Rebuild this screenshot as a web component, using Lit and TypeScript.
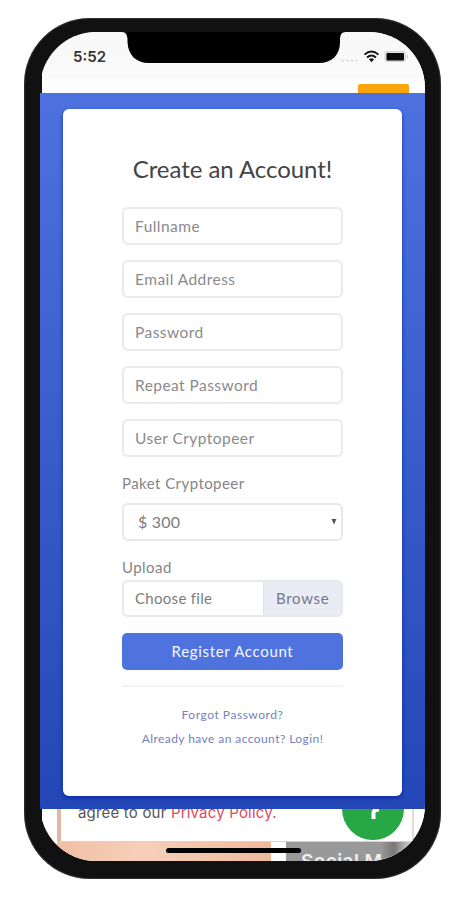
import { LitElement, html, css } from "lit";
import { customElement } from "lit/decorators.js";

@customElement("status-bar")
class StatusBar extends LitElement {
  static styles = css`
    :host { display: block; height: 61px; background: linear-gradient(#f8f8f8, #fafafa 45px, #fff 50px); position: relative; }
    .row { display: flex; align-items: center; height: 50px; padding: 0 17px 0 31px; justify-content: space-between; }
    .time { font: 600 15px/20px "Inter", "Liberation Sans", sans-serif; color: #333; }
    .icons { display: block; width: 68px; height: 16px; }
    .notch { position: absolute; left: 80px; top: -1px; width: 224px; height: 33px; }
    .tab { position: absolute; left: 316px; top: 52px; width: 51px; height: 9px; background: #fba50a; border-radius: 2px 2px 0 0; }
  `;
  render() {
    return html`
      <div class="row">
        <span class="time">5:52</span>
        <svg class="icons" viewBox="0 0 68 16">
          <g fill="#d0d0d0"><circle cx="2.500" cy="11.500" r="1"/><circle cx="7.500" cy="11.500" r="1"/><circle cx="12" cy="11.500" r="1"/><circle cx="16.500" cy="11.500" r="1"/></g>
          <g fill="none" stroke="#171717" stroke-width="1.900"><path d="M24.500 5.600Q31.500 -.4 38.500 5.600"/><path d="M27 8.500Q31.500 4.500 36 8.500"/></g>
          <path d="M28.900 10.200Q31.500 8.200 34.100 10.200L31.500 13.200Z" fill="#171717"/>
          <rect x="45" y="2.500" width="20.500" height="10" rx="2" fill="#e6e6e6" stroke="#d0d0d0"/>
          <rect x="46.500" y="4" width="17.500" height="7.500" rx="1" fill="#090909"/>
          <path d="M67 5.500Q69 7.500 67 9.500Z" fill="#bbb"/>
        </svg>
      </div>
      <svg class="notch" viewBox="0 0 224 33">
        <path d="M0 0V1C4 1 5 4 5.500 8V11C6 24 14 32 27 32H197C210 32 218 24 218 11V8C218.500 4 219 1 224 1V0Z" fill="#000"/>
      </svg>
      <div class="tab"></div>
    `;
  }
}

@customElement("text-field")
class TextField extends LitElement {
  static styles = css`
    :host { display: flex; align-items: center; box-sizing: border-box; height: 38px; border: 2px solid #eaeaed; border-radius: 6px; padding: 0 11px 1px; background: #fff; color: #8a8a8d; white-space: nowrap; }
  `;
  render() {
    return html`<span><slot></slot></span>`;
  }
}

@customElement("register-form")
class RegisterForm extends LitElement {
  static styles = css`
    :host { display: block; box-sizing: border-box; height: 716px; margin-left: -2px; padding: 16px 23px 13px; background: linear-gradient(#4d72df, #2347b6); font: 15px/20px "Lato", sans-serif; color: #858588; white-space: nowrap; }
    .card { box-sizing: border-box; height: 687px; border-radius: 6px; background: #fff; padding: 43px 59px 0; box-shadow: 0 2px 4px #0019a0aa; }
    h1 { margin: 0; font: 400 24px/34px "Lato", sans-serif; color: #444; text-align: center; letter-spacing: -.05px; }
    .fields { display: flex; flex-direction: column; gap: 15px; margin-top: 21px; }
    text-field { font-size: 15.500px; letter-spacing: .450px; }
    .label { letter-spacing: .440px; }
    .paket { margin-top: 16px; }
    .box { box-sizing: border-box; height: 38px; border: 2px solid #e7e8ee; border-radius: 6px; display: flex; align-items: center; justify-content: space-between; overflow: hidden; }
    .select { margin-top: 10px; padding: 0 4px 1px 14px; font-size: 16px; color: #7c7c80; letter-spacing: .2px; }
    .arrow { width: 6px; height: 6px; }
    .upload { margin-top: 16px; }
    .file { margin-top: 3px; height: 37px; padding-left: 11px; color: #7c7c80; letter-spacing: .300px; }
    .name { margin-bottom: 1px; }
    .browse { box-sizing: border-box; width: 78px; height: 34px; line-height: 33px; padding-left: 12px; border-left: 1px solid #e0e2ea; background: #e9ecf5; color: #75778a; letter-spacing: .7px; }
    .button { height: 37px; margin-top: 16px; border-radius: 5px; background: #4e73df; color: #f4f7ff; text-align: center; line-height: 36px; letter-spacing: .680px; }
    .rule { height: 2px; background: #f3f3f4; margin: 15px 0 18px; }
    .link { font-size: 12px; line-height: 20px; margin-bottom: 3.500px; text-align: center; color: #747fbd; letter-spacing: .540px; }
    .last { letter-spacing: .430px; }
  `;
  render() {
    const fields = ["Fullname", "Email Address", "Password", "Repeat Password", "User Cryptopeer"];
    return html`
      <div class="card">
        <h1>Create an Account!</h1>
        <div class="fields">${fields.map((f) => html`<text-field>${f}</text-field>`)}</div>
        <div class="label paket">Paket Cryptopeer</div>
        <div class="box select"><span>$ 300</span>
          <svg class="arrow" viewBox="0 0 6 6"><path d="M0.500 0H5.500L3 5.500Z" fill="#555"/></svg></div>
        <div class="label upload">Upload</div>
        <div class="box file"><span class="name">Choose file</span><div class="browse">Browse</div></div>
        <div class="button">Register Account</div>
        <div class="rule"></div>
        <div class="link">Forgot Password?</div>
        <div class="link last">Already have an account? Login!</div>
      </div>
    `;
  }
}

@customElement("page-footer")
class PageFooter extends LitElement {
  static styles = css`
    :host { display: block; height: 52px; background: #fff; position: relative; overflow: hidden; font-family: "Inter", "Liberation Sans", sans-serif; }
    .panel { box-sizing: border-box; height: 33px; margin: 0 11px 0 15px; border-left: 4px solid #dfb8a5; border-right: 2px solid #ddd; border-bottom: 1px solid #dcd0ca; padding-left: 17px; overflow: hidden; }
    .text { font-size: 15px; line-height: 20px; margin-top: -6px; white-space: nowrap; color: #555; letter-spacing: .190px; }
    .red { color: #e14a5b; }
    .photos { display: flex; gap: 15px; height: 19px; margin-left: 15px; }
    .photo { width: 214px; background: linear-gradient(90deg, #f2bea5, #f7cfb9 40%, #eeb99e); }
    .social { flex: 1; background: linear-gradient(90deg, #999 0 95px, #777 108px, #bbb 120px, #eee); color: #eee; font-weight: 600; font-size: 19px; letter-spacing: .4px; line-height: 22px; padding: 9px 0 0 15px; white-space: nowrap; overflow: hidden; box-sizing: border-box; }
    .fab { position: absolute; left: 300px; top: -31px; width: 62px; height: 62px; border-radius: 50%; background: #28a745; }
    .glyph { display: block; width: 62px; height: 62px; }
    .home { position: absolute; left: 124px; top: 39px; width: 135px; height: 5px; border-radius: 3px; background: #000; }
  `;
  render() {
    return html`
      <div class="panel"><div class="text">agree to our <span class="red">Privacy Policy.</span></div></div>
      <div class="photos"><div class="photo"></div><div class="social">Social M</div></div>
      <div class="fab"><svg class="glyph" viewBox="0 0 62 62"><path d="M31.500 41V35Q31.500 31.500 37 31.500" fill="none" stroke="#fff" stroke-width="4"/></svg></div>
      <div class="home"></div>
    `;
  }
}

@customElement("app-root")
class AppRoot extends LitElement {
  static styles = css`
    :host { display: block; box-sizing: border-box; width: 469px; height: 900px; background: #fff; padding: 18px 28px 21px 24px; overflow: hidden; }
    .phone { box-sizing: border-box; width: 417px; height: 861px; border-radius: 66px; background: #111; padding: 14px 16px 18px 18px; box-shadow: inset 0 0 2px #777; }
    .screen { height: 829px; border-radius: 54px; background: #fff; clip-path: inset(0 0 0 -2px round 56px); }
  `;
  render() {
    return html`<div class="phone"><div class="screen">
      <status-bar></status-bar><register-form></register-form><page-footer></page-footer>
    </div></div>`;
  }
}
